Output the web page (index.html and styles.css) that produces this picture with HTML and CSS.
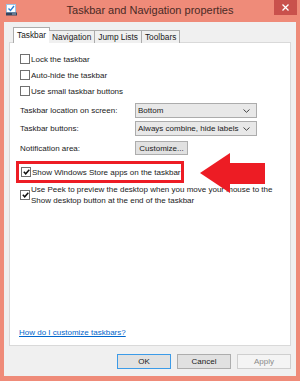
FILE: index.html
```html
<!DOCTYPE html>
<html lang="en">
<head>
  <meta charset="UTF-8">
  <title>Taskbar and Navigation properties</title>
  <link rel="stylesheet" href="styles.css">
</head>
<body>
  <div class="window">
    <div class="titlebar">
      <svg class="app-icon" width="11" height="12" viewBox="0 0 11 12">
        <rect x="0.5" y="0.5" width="9" height="8" fill="#fff" stroke="#9cc3e6"/>
        <path d="M2.5 4.5 L4.5 6.5 L8 2" fill="none" stroke="#2a7fd4" stroke-width="1.4"/>
        <rect x="0" y="8.5" width="11" height="3" fill="#34455e"/>
        <rect x="6" y="9.5" width="4" height="1" fill="#9fb3c8"/>
      </svg>
      <div class="title">Taskbar and Navigation properties</div>
      <div class="close">
        <svg width="7" height="7" viewBox="0 0 7 7">
          <path d="M0.5 0.5 L6.5 6.5 M6.5 0.5 L0.5 6.5" stroke="#fff" stroke-width="1.3"/>
        </svg>
      </div>
    </div>

    <div class="client">
      <div class="tabs">
        <div class="tab active">Taskbar</div>
        <div class="tab">Navigation</div>
        <div class="tab">Jump Lists</div>
        <div class="tab">Toolbars</div>
      </div>

      <div class="panel">
        <div class="check"><span class="box"></span>Lock the taskbar</div>
        <div class="check"><span class="box"></span>Auto-hide the taskbar</div>
        <div class="check"><span class="box"></span>Use small taskbar buttons</div>

        <div class="fields">
          <div class="field">
            <span class="label">Taskbar location on screen:</span>
            <div class="combo">Bottom<svg class="chevron" width="7" height="4" viewBox="0 0 7 4"><path d="M0.5 0.5 L3.5 3.3 L6.5 0.5" fill="none" stroke="#444" stroke-width="1"/></svg></div>
          </div>
          <div class="field">
            <span class="label">Taskbar buttons:</span>
            <div class="combo">Always combine, hide labels<svg class="chevron" width="7" height="4" viewBox="0 0 7 4"><path d="M0.5 0.5 L3.5 3.3 L6.5 0.5" fill="none" stroke="#444" stroke-width="1"/></svg></div>
          </div>
          <div class="field notify">
            <span class="label">Notification area:</span>
            <div class="btn">Customize...</div>
          </div>
        </div>

        <div class="highlight">
          <div class="check"><span class="box on"><svg width="7" height="6" viewBox="0 0 7 6"><path d="M0.8 2.8 L2.7 4.8 L6.3 0.8" fill="none" stroke="#111" stroke-width="1.5"/></svg></span>Show Windows Store apps on the taskbar</div>
        </div>

        <div class="check multi"><span class="box on"><svg width="7" height="6" viewBox="0 0 7 6"><path d="M0.8 2.8 L2.7 4.8 L6.3 0.8" fill="none" stroke="#111" stroke-width="1.5"/></svg></span><span>Use Peek to preview the desktop when you move your mouse to the Show desktop button at the end of the taskbar</span></div>

        <a class="help" href="#">How do I customize taskbars?</a>

        <!-- annotation arrow drawn over the dialog -->
        <svg class="arrow" width="66" height="42" viewBox="0 0 66 42">
          <path d="M0 20 L30 0 L30 10 L65 10 L65 31 L30 31 L30 40 Z" fill="#ed1c24"/>
        </svg>
      </div>

      <div class="buttons">
        <div class="btn default">OK</div>
        <div class="btn">Cancel</div>
        <div class="btn disabled">Apply</div>
      </div>
    </div>
  </div>
</body>
</html>
```

FILE: styles.css
```css
body {
  margin: 0;
  background: #ef8b79;
  font-family: "Liberation Sans", Arial, sans-serif;
  font-size: 8px;
  color: #1a1a1a;
}
.window {
  width: 300px; height: 381px;
  display: flex; flex-direction: column;
}

/* title bar */
.titlebar {
  height: 22px; flex: none;
  display: flex; align-items: center;
  position: relative;
}
.app-icon { margin: -2px 0 0 6px; }
.title {
  position: absolute; left: 0; right: 0; top: 4px;
  text-align: center;
  font-size: 11px; color: #4a2a25;
}
.close {
  position: absolute; top: 0; right: 3px;
  width: 23px; height: 15px;
  background: #c9514c;
  display: flex; align-items: center; justify-content: center;
}

/* client area */
.client {
  height: 354px; margin: 0 4px;
  background: #f0f0f0;
  display: flex; flex-direction: column;
}
.tabs {
  display: flex; align-items: flex-end;
  height: 16px; margin: 5px 0 -1px 9px;
  position: relative; z-index: 1;
  font-size: 8.3px;
}
.tab {
  height: 13px; box-sizing: border-box;
  border: 1px solid #acacac; border-bottom: none; border-left: none;
  background: #f0f0f0;
  padding: 0 3px; line-height: 13px;
}
.tab.active {
  height: 16px; line-height: 14px;
  border-left: 1px solid #acacac;
  background: #fff; padding: 0 3px;
  margin-right: -1px;
}

.panel {
  position: relative;
  height: 304px; box-sizing: border-box;
  margin: 0 5px;
  background: #fff; border: 1px solid #d9d9d9;
  padding: 8px 0 7px 10px;
  display: flex; flex-direction: column;
}

.check {
  display: flex; align-items: center;
  height: 16px; white-space: nowrap;
}
.box {
  width: 8px; height: 8px; flex: none;
  border: 1px solid #707070; background: #fff;
  margin-right: 1px;
  display: flex; align-items: center; justify-content: center;
}

.fields { display: flex; flex-direction: column; gap: 3px; margin-top: 4px; }
.field { display: flex; align-items: center; height: 15px; }
.field .label { width: 115px; }
.field.notify { margin-top: 2px; height: 14px; }
.combo {
  width: 122px; height: 15px; box-sizing: border-box;
  border: 1px solid #acacac; background: #e8e8e8;
  display: flex; align-items: center; justify-content: space-between;
  padding: 0 6px 0 2px;
}

.btn {
  height: 15px; box-sizing: border-box;
  border: 1px solid #adadad; background: #e1e1e1;
  display: flex; align-items: center; justify-content: center;
}
.notify .btn { width: 53px; height: 14px; }

.highlight {
  margin: 6px 0 0 -4px;
  width: 168px; height: 22px; box-sizing: border-box;
  border: 3px solid #ed1c24;
  padding-left: 2px;
}
.highlight .check { height: 16px; }

.check.multi {
  align-items: flex-start; height: auto;
  margin-top: 1px; line-height: 11px;
  white-space: normal;
}
.check.multi .box { margin-top: 6px; }

.help {
  margin: auto 0 0 -1px;
  color: #0066cc; line-height: 11px;
}

.arrow { position: absolute; left: 190px; top: 110px; }

.buttons {
  display: flex; justify-content: flex-end; gap: 6px;
  margin: 8px 5px 0 0;
}
.buttons .btn { width: 54px; }
.btn.default { border-color: #3c9be8; }
.btn.disabled { background: #f4f4f4; border-color: #cfcfcf; color: #8a8a8a; }
```
